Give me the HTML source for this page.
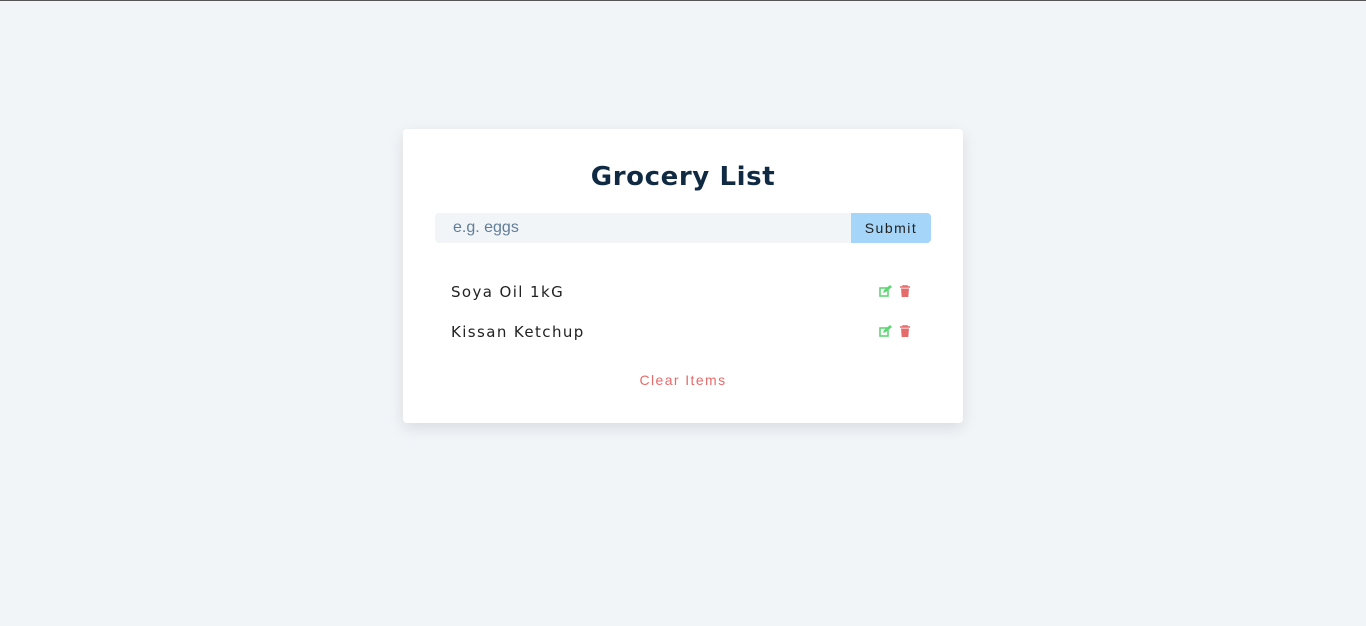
<!DOCTYPE html>
<html><head><style>
body{margin:0;width:1366px;height:626px;background:#f1f5f8;font-family:"Liberation Sans",sans-serif;border-top:1px solid #555;box-sizing:border-box;position:relative;overflow:hidden}
.card{position:absolute;left:403px;top:128px;width:560px;height:294px;background:#fff;border-radius:4px;box-shadow:0 5px 15px rgba(0,0,0,0.1)}
h3{position:absolute;top:33px;left:0;width:100%;margin:0;text-align:center;font-weight:bold;color:#102a43;letter-spacing:0.6px;font-family:"DejaVu Sans","Liberation Sans",sans-serif;font-size:26px}
.inp{position:absolute;left:32px;top:84px;width:416px;height:30px;background:#f1f5f8;border-radius:4px 0 0 4px;color:#617d98;font-size:16px;line-height:30px;padding-left:18px;box-sizing:border-box}
.btn{position:absolute;left:448px;top:84px;width:80px;height:30px;background:#a5d5f8;border-radius:0 4px 4px 0;font-size:14px;line-height:30px;text-align:center;letter-spacing:1.5px;color:#222}
.item{position:absolute;left:48px;letter-spacing:1.4px;color:#222;font-family:"DejaVu Sans",sans-serif;font-size:15px}
.ic{position:absolute;left:476px}
.clr{position:absolute;top:243px;width:100%;text-align:center;color:#e66b6b;font-size:14px;letter-spacing:1.4px}
</style></head><body>
<div class="card">
<h3>Grocery List</h3>
<div class="inp">e.g. eggs</div>
<div class="btn">Submit</div>
<div class="item" style="top:154px">Soya Oil 1kG</div>
<div class="item" style="top:194px">Kissan Ketchup</div>
<svg class="ic" style="top:155px" width="34" height="14" viewBox="0 0 34 14"><rect x="1" y="4" width="8" height="8" fill="none" stroke="#5fd675" stroke-width="1.6"/><path d="M4 9l1-3 6-5 2 2-6 5z" fill="#5fd675"/><path d="M21 3h10M24 3v-1h4v1" stroke="#e66b6b" stroke-width="1.5" fill="none"/><path d="M22 4.5h8l-.7 8.5h-6.6z" fill="#e66b6b"/></svg>
<svg class="ic" style="top:195px" width="34" height="14" viewBox="0 0 34 14"><rect x="1" y="4" width="8" height="8" fill="none" stroke="#5fd675" stroke-width="1.6"/><path d="M4 9l1-3 6-5 2 2-6 5z" fill="#5fd675"/><path d="M21 3h10M24 3v-1h4v1" stroke="#e66b6b" stroke-width="1.5" fill="none"/><path d="M22 4.5h8l-.7 8.5h-6.6z" fill="#e66b6b"/></svg>
<div class="clr">Clear Items</div>
</div>
</body></html>
